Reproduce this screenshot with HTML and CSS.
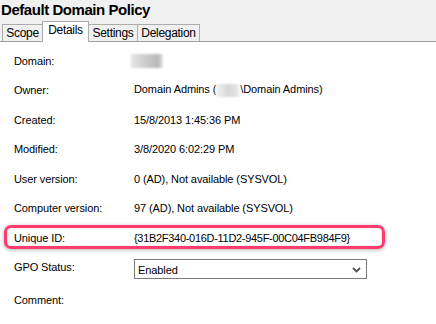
FILE: index.html
```html
<!DOCTYPE html>
<html>
<head>
<meta charset="utf-8">
<link rel="stylesheet" href="styles.css">
</head>
<body>
<div class="header">
  <h1 class="title">Default Domain Policy</h1>
  <div class="tabs">
    <div class="tab tab-scope">Scope</div>
    <div class="tab tab-details active">Details</div>
    <div class="tab tab-settings">Settings</div>
    <div class="tab tab-delegation">Delegation</div>
  </div>
</div>
<div class="content">
  <div class="grid">
    <div class="label">Domain:</div>
    <div class="value"><span class="blur blur-domain"></span></div>
    <div class="label">Owner:</div>
    <div class="value">Domain Admins (<span class="blur blur-owner"></span>\Domain Admins)</div>
    <div class="label">Created:</div>
    <div class="value">15/8/2013 1:45:36 PM</div>
    <div class="label">Modified:</div>
    <div class="value">3/8/2020 6:02:29 PM</div>
    <div class="label">User version:</div>
    <div class="value">0 (AD), Not available (SYSVOL)</div>
    <div class="label">Computer version:</div>
    <div class="value">97 (AD), Not available (SYSVOL)</div>
    <div class="label">Unique ID:</div>
    <div class="value guid">{31B2F340-016D-11D2-945F-00C04FB984F9}</div>
    <div class="label">GPO Status:</div>
    <div class="value">
      <div class="select"><span>Enabled</span>
        <svg class="chev" width="9" height="6" viewBox="0 0 9 6"><path d="M1 1 L4.5 4.5 L8 1" fill="none" stroke="#555" stroke-width="1.8"/></svg>
      </div>
    </div>
    <div class="label comment">Comment:</div>
    <div class="value"></div>
  </div>
  <div class="highlight"></div>
</div>
</body>
</html>
```
FILE: styles.css
```css
* { box-sizing: border-box; }
html, body { margin: 0; padding: 0; }
body {
  width: 436px;
  height: 324px;
  overflow: hidden;
  background: #ffffff;
  font-family: "Liberation Sans", Arial, sans-serif;
  font-size: 11px;
  color: #000;
}
.header {
  background: #f0f0f0;
  height: 42px;
  border-bottom: 1px solid #a0a0a0;
  position: relative;
}
.title {
  margin: 0;
  padding: 1px 0 0 1px;
  font-size: 15px;
  font-weight: bold;
  line-height: 18px;
  height: 21px;
  letter-spacing: -0.45px;
}
.tabs {
  display: flex;
  align-items: flex-end;
  padding-left: 2px;
  height: 20px;
  font-size: 12px;
  letter-spacing: -0.3px;
}
.tab {
  height: 17px;
  border: 1px solid #acacac;
  border-bottom: none;
  border-right: none;
  text-align: center;
  line-height: 17px;
  background: #f0f0f0;
}
.tab-scope { width: 40px; }
.tab-details { width: 47px; }
.tab-settings { width: 48px; }
.tab-delegation { width: 63px; }
.tab:last-child { border-right: 1px solid #acacac; }
.tab.active {
  height: 21px;
  background: #fff;
  border-right: 1px solid #acacac;
  margin-bottom: -1px;
  line-height: 16px;
  position: relative;
  z-index: 1;
}
.tab.active + .tab { border-left: none; }
.content {
  position: relative;
  height: 281px;
  padding-top: 4px;
}
.grid {
  display: grid;
  grid-template-columns: 120px 1fr;
  grid-auto-rows: 29.5px;
  align-items: center;
  padding-left: 14px;
  letter-spacing: -0.1px;
}
.value { white-space: nowrap; }
.guid { letter-spacing: -0.3px; }
.blur {
  display: inline-block;
  vertical-align: middle;
  background: linear-gradient(90deg, #e6e6e6, #cfcfcf 40%, #b8b8b8 85%, #e8e8e8);
  filter: blur(0.8px);
}
.blur-domain { width: 32px; height: 14px; margin-left: -3px; }
.blur-owner { width: 24px; height: 13px; background: linear-gradient(90deg, #f2f2f2, #d8d8d8 50%, #e0e0e0 80%, #f6f6f6); }
.select {
  width: 233px;
  height: 20px;
  border: 1px solid #7a7a7a;
  display: flex;
  align-items: center;
  justify-content: space-between;
  padding: 1px 5px 0 3px;
  margin-top: 4px;
}
.chev { margin-top: 1px; }
.comment { margin-top: 6px; }
.highlight {
  position: absolute;
  left: 4px;
  top: 183px;
  width: 381px;
  height: 24px;
  border: 3px solid #ff3a6e;
  border-radius: 7px;
  box-shadow: 0 1px 4px rgba(0,0,0,0.3), inset 0 0 2px rgba(0,0,0,0.15);
}
```
